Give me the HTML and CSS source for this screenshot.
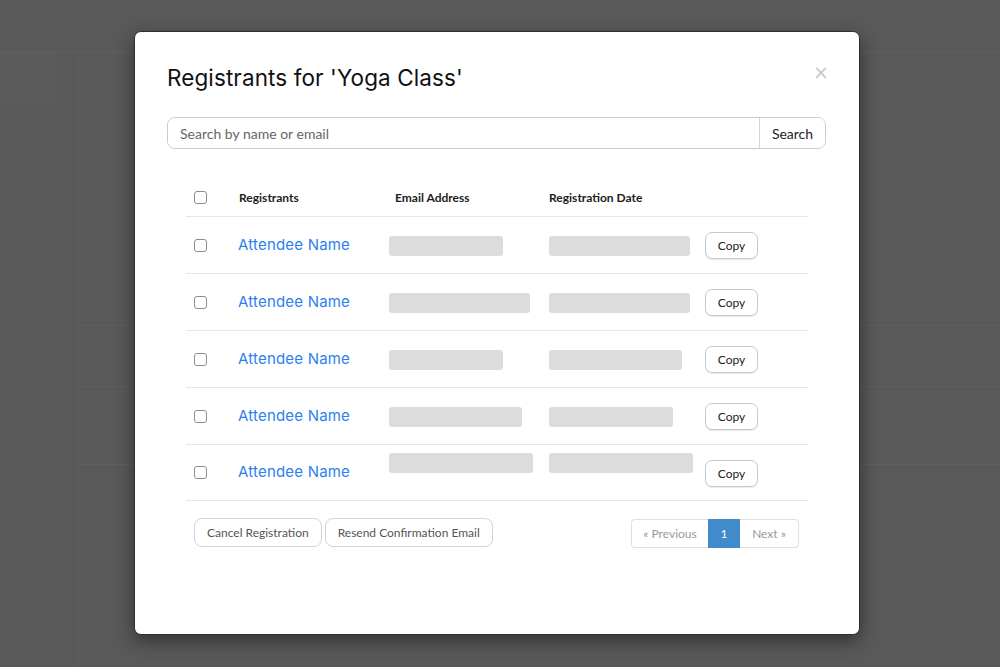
FILE: index.html
```html
<!DOCTYPE html>
<html lang="en">
<head>
  <meta charset="UTF-8">
  <meta name="viewport" content="width=device-width, initial-scale=1.0">
  <title>Registrants</title>
  <link rel="stylesheet" href="styles.css">
</head>
<body>
  <div class="page">
    <div class="topbar"></div>
    <div class="main">
      <aside class="side"><div class="side-item"></div></aside>
      <section class="content">
        <div class="content-gap"></div>
        <div class="content-row"></div>
        <div class="content-row tall"></div>
      </section>
    </div>
  </div>

  <div class="modal">
    <div class="modal-head">
      <h2>Registrants for 'Yoga Class'</h2>
      <span class="close">&times;</span>
    </div>

    <form class="search">
      <input type="text" placeholder="Search by name or email">
      <button type="button">Search</button>
    </form>

    <div class="table">
      <div class="tr th">
        <div class="cell"><input type="checkbox" class="chk"></div>
        <div class="cell">Registrants</div>
        <div class="cell email-h">Email Address</div>
        <div class="cell">Registration Date</div>
        <div class="cell"></div>
      </div>
      <div class="tr">
        <div class="cell"><input type="checkbox" class="chk"></div>
        <div class="cell"><a class="name" href="#">Attendee Name</a></div>
        <div class="cell"><span class="bar" style="width:114px"></span></div>
        <div class="cell"><span class="bar" style="width:141px"></span></div>
        <div class="cell"><button type="button" class="copy">Copy</button></div>
      </div>
      <div class="tr">
        <div class="cell"><input type="checkbox" class="chk"></div>
        <div class="cell"><a class="name" href="#">Attendee Name</a></div>
        <div class="cell"><span class="bar" style="width:141px"></span></div>
        <div class="cell"><span class="bar" style="width:141px"></span></div>
        <div class="cell"><button type="button" class="copy">Copy</button></div>
      </div>
      <div class="tr">
        <div class="cell"><input type="checkbox" class="chk"></div>
        <div class="cell"><a class="name" href="#">Attendee Name</a></div>
        <div class="cell"><span class="bar" style="width:114px"></span></div>
        <div class="cell"><span class="bar" style="width:133px"></span></div>
        <div class="cell"><button type="button" class="copy">Copy</button></div>
      </div>
      <div class="tr">
        <div class="cell"><input type="checkbox" class="chk"></div>
        <div class="cell"><a class="name" href="#">Attendee Name</a></div>
        <div class="cell"><span class="bar" style="width:133px"></span></div>
        <div class="cell"><span class="bar" style="width:124px"></span></div>
        <div class="cell"><button type="button" class="copy">Copy</button></div>
      </div>
      <div class="tr top-bars">
        <div class="cell"><input type="checkbox" class="chk"></div>
        <div class="cell"><a class="name" href="#">Attendee Name</a></div>
        <div class="cell"><span class="bar" style="width:144px"></span></div>
        <div class="cell"><span class="bar" style="width:144px"></span></div>
        <div class="cell"><button type="button" class="copy">Copy</button></div>
      </div>
    </div>

    <div class="actions">
      <div class="action-btns">
        <button type="button" class="btn">Cancel Registration</button>
        <button type="button" class="btn">Resend Confirmation Email</button>
      </div>
      <ul class="pagination">
        <li class="prev">&laquo; Previous</li>
        <li class="active">1</li>
        <li class="next">Next &raquo;</li>
      </ul>
    </div>
  </div>
</body>
</html>
```

FILE: styles.css
```css
*{box-sizing:border-box;}
html,body{margin:0; padding:0;}
body{width:1000px; height:667px; overflow:hidden; background-color:#595959; font-family:"Lato","Liberation Sans",sans-serif; color:#222;}

/* page behind the overlay */
.page{height:667px; display:flex; flex-direction:column;}
.topbar{height:52px; border-bottom:1px solid #5f5f5f;}
.main{flex:1; display:flex;}
.side{width:79px; border-right:1px solid #5d5d5d;}
.side-item{width:55px; height:53px; background-color:#5c5c5c;}
.content{flex:1;}
.content-gap{height:273px;}
.content-row{height:61px; border-top:1px solid #5f5f5f;}
.content-row.tall{height:79px; border-bottom:1px solid #5f5f5f;}

/* modal */
.modal{position:absolute; top:31px; left:134px; width:726px; height:604px; padding:31px 33px 0 32px; background-color:#fff; border:1px solid #2e2e2e; border-radius:7px; box-shadow:0 6px 18px rgba(0,0,0,.45);}
.modal-head{display:flex; justify-content:space-between; align-items:flex-start;}
.modal-head h2{margin:0; font-family:"Inter","Noto Sans",sans-serif; font-weight:400; font-size:22.5px; line-height:30px; color:#111; letter-spacing:0.1px;}
.close{margin:-1px -3px 0 0; font-family:"DejaVu Sans",sans-serif; font-size:19px; line-height:20px; color:#c9c9c9;}

.search{display:flex; height:32px; margin-top:24px; border:1px solid #c9c9d8; border-radius:8px; overflow:hidden;}
.search input{flex:1; border:0; padding:0 12px; font-family:"Lato",sans-serif; font-size:14px; color:#333; outline:none;}
.search input::placeholder{color:#666;}
.search button{width:66px; border:0; border-left:1px solid #d4d4df; background-color:#fff; font-family:"Lato",sans-serif; font-size:14px; color:#222; padding:0;}

.table{margin:31px 18px 0 19px;}
.tr{display:grid; grid-template-columns:52px 151px 160px 156px 1fr; align-items:center; height:57px; border-bottom:1px solid #e6e6e6;}
.tr.th{height:37px; align-items:center; padding-bottom:2px; font-size:12px; font-weight:700; color:#1d1d1d;}
.th .cell:nth-child(2){padding-left:1px;}
.th .email-h{padding-left:6px;}
.cell{display:flex; align-items:center;}
.chk{appearance:none; -webkit-appearance:none; width:13px; height:13px; margin:0 0 0 8px; border:1.5px solid #8c8c8c; border-radius:3px; background:#fff;}
.name{margin-top:-2px; font-family:"Inter","Noto Sans",sans-serif; font-size:15px; color:#2d7ff0; text-decoration:none; letter-spacing:0.2px;}
.bar{display:block; height:20px; margin-top:1px; border-radius:3px; background-color:#dcdcdc;}
.copy{width:53px; height:27px; padding:0; background-color:#fff; border:1px solid #c6c6d6; border-radius:7px; box-shadow:0 1px 1px rgba(0,0,0,.08); font-family:"Lato",sans-serif; font-size:12px; color:#222;}
.top-bars{height:56px;}
.top-bars .bar{align-self:flex-start; margin-top:8px;}
.top-bars .cell:nth-child(3), .top-bars .cell:nth-child(4){align-self:start;}
.top-bars .cell:nth-child(5){padding-top:1px;}

.actions{display:flex; justify-content:space-between; align-items:flex-start; margin:17px 27px 0 27px;}
.action-btns{display:flex; gap:3px;}
.btn{height:29px; padding:0 12px; background-color:#fff; border:1px solid #d2d2de; border-radius:8px; font-family:"Lato",sans-serif; font-size:12px; color:#555;}
.pagination{display:flex; margin:1px 0 0; padding:0; list-style:none; height:29px; font-size:12px; color:#999;}
.pagination li{display:flex; align-items:center; justify-content:center; height:29px; border:1px solid #e0e0e0;}
.pagination .prev{width:77px; border-radius:4px 0 0 4px; border-right:0;}
.pagination .active{width:32px; background-color:#428bca; border-color:#428bca; color:#fff;}
.pagination .next{width:59px; border-radius:0 4px 4px 0; border-left:0;}
```
